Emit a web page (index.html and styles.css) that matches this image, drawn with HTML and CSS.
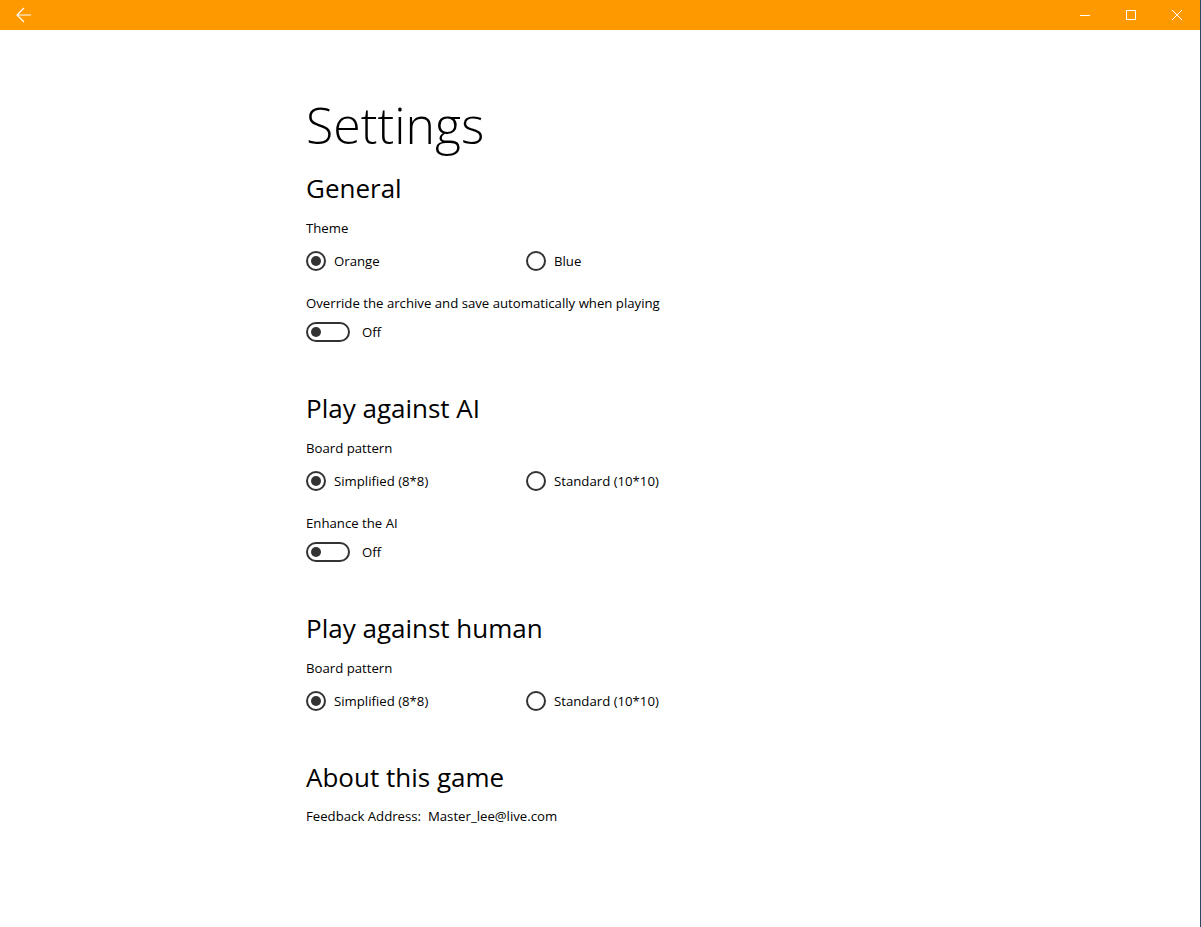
FILE: index.html
```html
<!DOCTYPE html>
<html lang="en">
<head>
<meta charset="utf-8">
<title>Settings</title>
<link rel="stylesheet" href="styles.css">
</head>
<body>
<div class="window">
  <header class="titlebar">
    <button class="tb-btn back" aria-label="Back">
      <svg width="16" height="16" viewBox="0 0 16 16"><path d="M8 1 L1 8 L8 15 M1 8 H15" fill="none" stroke="#fff" stroke-width="1.2"/></svg>
    </button>
    <div class="tb-spacer"></div>
    <button class="tb-btn caption" aria-label="Minimize">
      <svg width="10" height="10" viewBox="0 0 10 10"><path d="M0 5.5 H10" stroke="#fff" stroke-width="1"/></svg>
    </button>
    <button class="tb-btn caption" aria-label="Maximize">
      <svg width="10" height="10" viewBox="0 0 10 10"><rect x="0.5" y="0.5" width="9" height="9" fill="none" stroke="#fff" stroke-width="1"/></svg>
    </button>
    <button class="tb-btn caption" aria-label="Close">
      <svg width="10" height="10" viewBox="0 0 10 10"><path d="M0 0 L10 10 M10 0 L0 10" stroke="#fff" stroke-width="1"/></svg>
    </button>
  </header>

  <main class="content">
    <h1 class="page-title">Settings</h1>

    <section class="group">
      <h2 class="group-title">General</h2>
      <div class="field-label">Theme</div>
      <div class="radio-row">
        <label class="radio checked"><span class="radio-mark"></span>Orange</label>
        <label class="radio"><span class="radio-mark"></span>Blue</label>
      </div>
      <div class="field-label gap-top">Override the archive and save automatically when playing</div>
      <div class="toggle-row">
        <span class="toggle"><span class="knob"></span></span>
        <span class="toggle-text">Off</span>
      </div>
    </section>

    <section class="group">
      <h2 class="group-title">Play against AI</h2>
      <div class="field-label">Board pattern</div>
      <div class="radio-row">
        <label class="radio checked"><span class="radio-mark"></span>Simplified (8*8)</label>
        <label class="radio"><span class="radio-mark"></span>Standard (10*10)</label>
      </div>
      <div class="field-label gap-top">Enhance the AI</div>
      <div class="toggle-row">
        <span class="toggle"><span class="knob"></span></span>
        <span class="toggle-text">Off</span>
      </div>
    </section>

    <section class="group">
      <h2 class="group-title">Play against human</h2>
      <div class="field-label">Board pattern</div>
      <div class="radio-row">
        <label class="radio checked"><span class="radio-mark"></span>Simplified (8*8)</label>
        <label class="radio"><span class="radio-mark"></span>Standard (10*10)</label>
      </div>
    </section>

    <section class="group">
      <h2 class="group-title">About this game</h2>
      <div class="field-label feedback">Feedback Address:&nbsp; Master_lee@live.com</div>
    </section>
  </main>
</div>
</body>
</html>
```
FILE: styles.css
```css
* { box-sizing: border-box; }

html, body {
  margin: 0;
  padding: 0;
  background: #ffffff;
}

body {
  font-family: "Open Sans", "Noto Sans", sans-serif;
  color: #000;
}

.window {
  width: 1201px;
  height: 927px;
  border-right: 1px solid #2e4866;
  overflow: hidden;
}

/* Title bar */
.titlebar {
  display: flex;
  align-items: stretch;
  height: 30px;
  background: #ff9900;
}

.tb-btn {
  display: flex;
  align-items: center;
  justify-content: center;
  border: 0;
  padding: 0;
  margin: 0;
  background: transparent;
  height: 30px;
}

.tb-btn.back {
  width: 48px;
}

.tb-btn.caption {
  width: 46px;
}

.tb-spacer { flex: 1; }

/* Page body */
.content {
  padding: 65px 0 0 306px;
}

.page-title {
  margin: 0;
  font-weight: 300;
  font-size: 50px;
  line-height: 60px;
  height: 60px;
  letter-spacing: 0;
}

.group {
  margin-top: 15px;
}

.group + .group {
  margin-top: 42px;
}

.group-title {
  margin: 0;
  font-weight: 400;
  font-size: 26px;
  line-height: 36px;
  height: 36px;
  letter-spacing: 0;
}

.field-label {
  margin-top: 12px;
  font-size: 13.2px;
  line-height: 20px;
  height: 20px;
}

.field-label.gap-top {
  margin-top: 16px;
}

.field-label.feedback {
  margin-top: 11px;
}

.radio-row {
  display: flex;
  margin-top: 7px;
  height: 32px;
}

.radio {
  display: flex;
  align-items: center;
  width: 220px;
  font-size: 13.2px;
  gap: 8px;
}

.radio-mark {
  width: 20px;
  height: 20px;
  border: 2px solid #333;
  border-radius: 50%;
  display: flex;
  align-items: center;
  justify-content: center;
  flex: none;
}

.radio.checked .radio-mark::after {
  content: "";
  width: 10px;
  height: 10px;
  border-radius: 50%;
  background: #333;
}

.toggle-row {
  display: flex;
  align-items: center;
  margin-top: 3px;
  height: 32px;
  gap: 12px;
}

.toggle {
  width: 44px;
  height: 20px;
  border: 2px solid #333;
  border-radius: 10px;
  display: flex;
  align-items: center;
  padding-left: 3px;
}

.knob {
  width: 10px;
  height: 10px;
  border-radius: 50%;
  background: #333;
}

.toggle-text {
  font-size: 13.2px;
}
```
